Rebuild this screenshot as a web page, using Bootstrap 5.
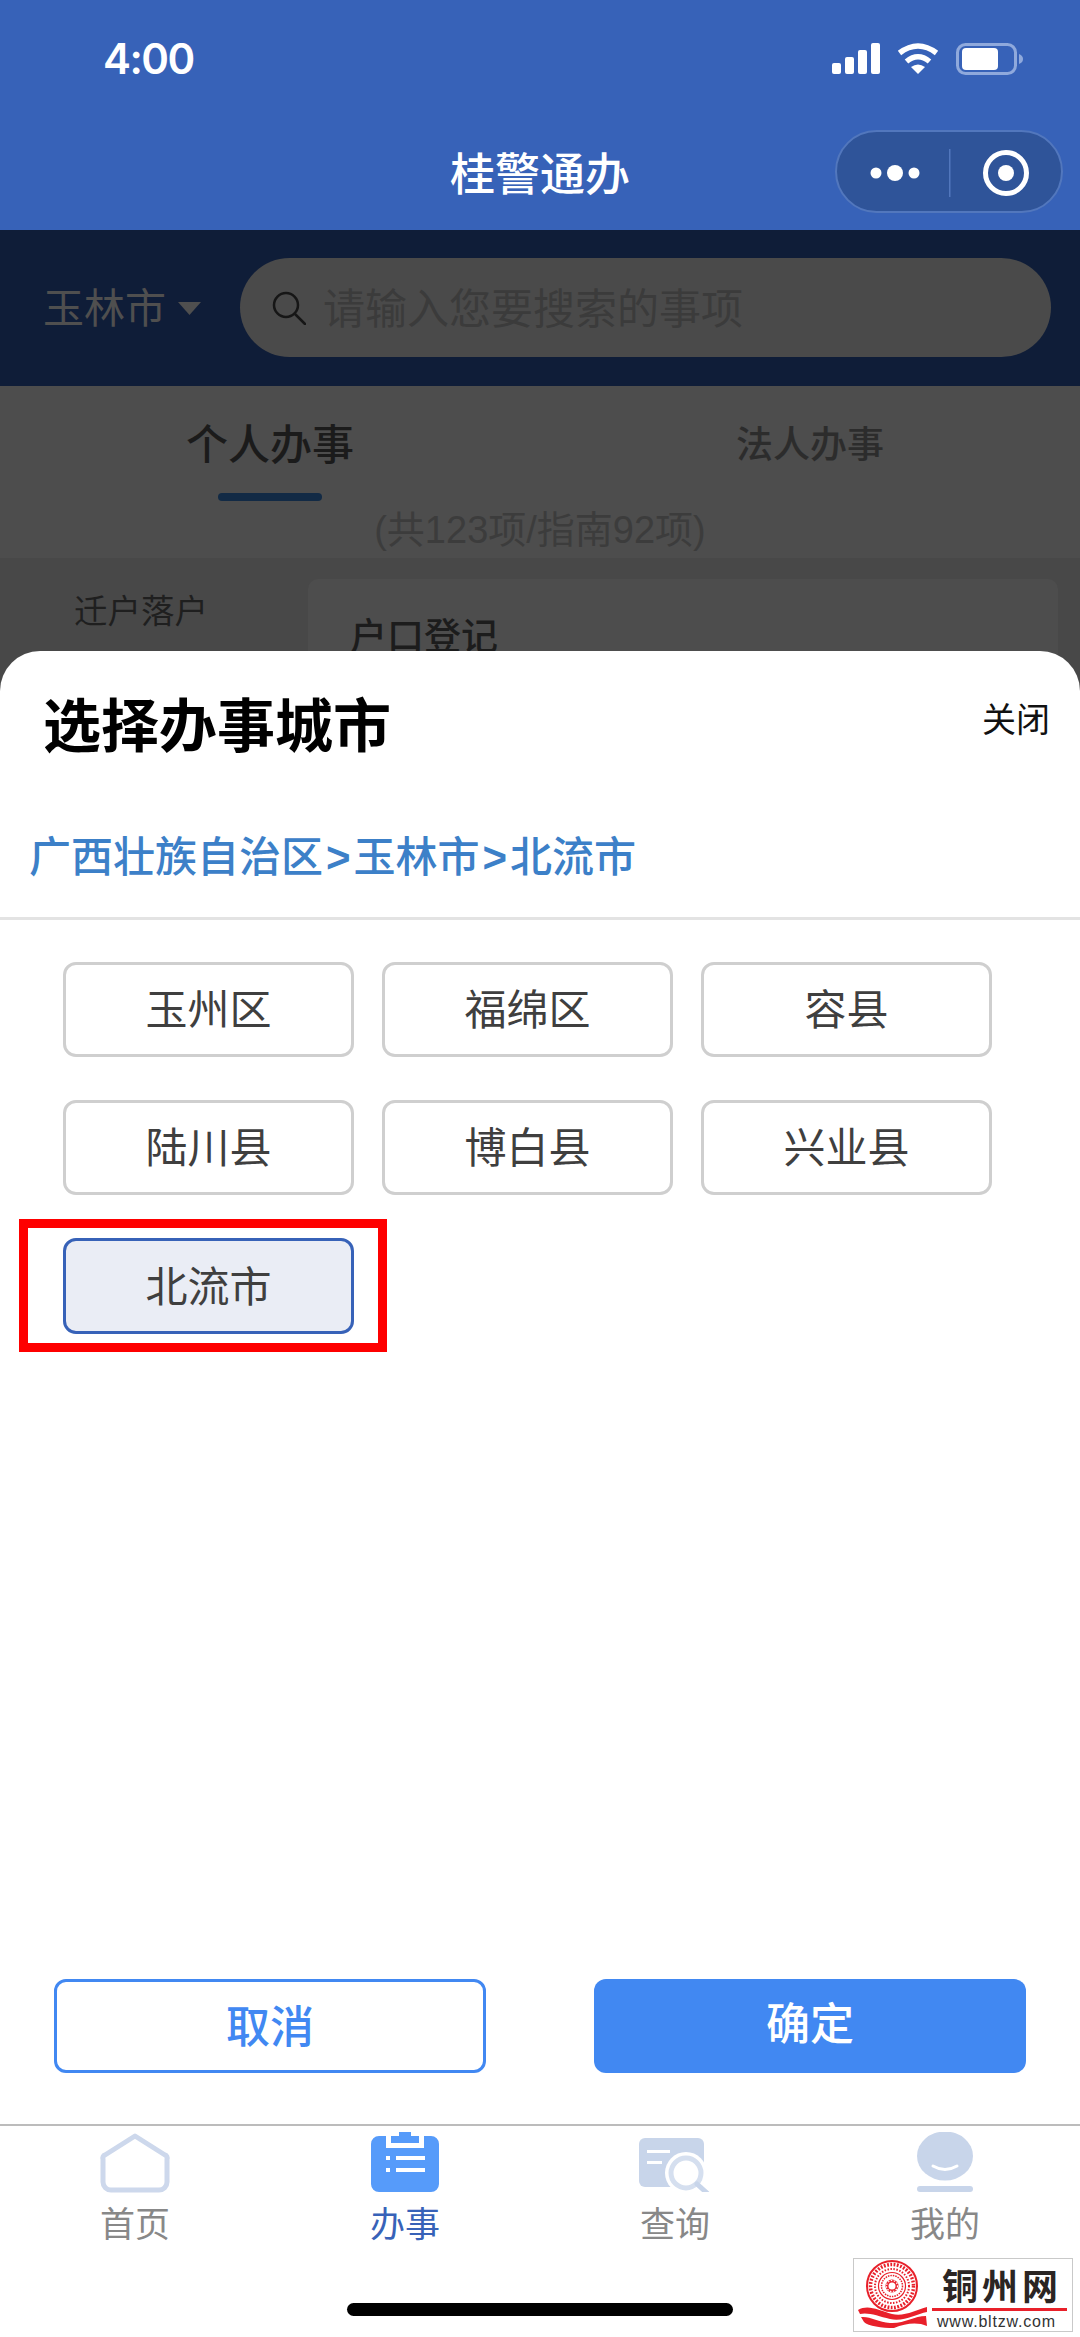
<!DOCTYPE html>
<html lang="zh-CN">
<head>
<meta charset="utf-8">
<title>桂警通办</title>
<link href="https://cdn.jsdelivr.net/npm/bootstrap@5.3.0/dist/css/bootstrap.min.css" rel="stylesheet">
<style>
html,body{margin:0;background:#fff}
body{font-family:"Liberation Sans","Noto Sans CJK SC",sans-serif}
.phone{width:1080px;height:2337px;overflow:hidden;background:#4d4d4d}
.topbar{height:230px;background:#3762b8;color:#fff}
.clock{left:103px;top:33px;font:600 42px/52px Inter,"Liberation Sans",sans-serif;letter-spacing:-1.5px}
.stat-icons{left:832px;top:43px}
.apptitle{height:90px;top:131px;left:0;right:0;font-size:45px;font-weight:500;line-height:90px}
.capsule{left:835px;top:130px;width:228px;height:83px;border-radius:42px;background:#2f5499;border:2px solid #5277bd}
.searchbar{height:156px;background:#0f1d38;padding:28px 29px 29px 43px}
.cityname{font-size:41px;color:#4f4f4f;line-height:99px;width:197px;padding-top:3px}
.tri{width:25px;height:14px;margin-left:11px;margin-top:-2px}
.searchpill{height:99px;width:811px;border-radius:50px;background:#4a4a4a;padding-left:32px}
.holder{font-size:42px;color:#3b3b3b;margin-left:17px;padding-top:3px}
.tabhead{height:172px;background:#4d4d4d}
.tabcell{width:50%;height:114px;line-height:120px;text-align:center}
.tab-on{font-size:42px;font-weight:500;color:#1b1b1b}
.tab-off{font-size:37px;font-weight:500;color:#2c2c2c}
.tabbar-mark{left:218px;top:107px;width:104px;height:8px;border-radius:4px;background:#122a45}
.tabcount{left:0;right:0;top:114px;line-height:60px;font-size:38px;color:#3c3c3c;text-align:center}
.listarea{background:#484848;height:800px;padding:21px 22px 0 0}
.leftmenu{width:308px;font-size:33.500px;color:#1f1f1f;text-align:center;padding:8px 26px 0 0}
.listcard{flex:1;height:300px;background:#4d4d4d;border-radius:10px;padding:34px 42px;font-size:37px;font-weight:500;color:#1c1c1c;line-height:50px}
.sheet{left:0;right:0;top:651px;bottom:0;background:#fff;border-radius:40px 40px 0 0}
.sheethead{height:132px;padding:0 30px 0 43px}
.sheettitle{font-size:58px;font-weight:700;color:#000;line-height:72px;padding-top:40px}
.closer{font-size:34px;color:#111;line-height:44px;padding-top:47px}
.crumb{height:137px;padding:45px 0 0 29px;font-size:42px;font-weight:500;color:#3c80c8;line-height:60px;border-bottom:3px solid #e3e3e3}
.crumb b{margin:0 3px}
.cityrow{display:grid;grid-template-columns:repeat(3,291px);column-gap:28px;row-gap:43px;padding:42px 0 0 63px}
.citybtn{height:95px;border:3px solid #cfcfcf;border-radius:13px;background:#fff;font-size:42px;color:#3f3f3f;padding:3px 0 0;line-height:1}
.citybtn.chosen{position:relative;background:#eaedf5;border-color:#3762b8;height:96px}
.redbox{position:absolute;left:-47px;right:-36px;top:-22px;bottom:-21px;border:9px solid #fe0000;pointer-events:none}
.actions{position:absolute;left:54px;right:54px;top:1328px;gap:108px}
.act{width:432px;height:94px;border-radius:12px;font-size:44px;font-weight:500;padding:4px 0 0;line-height:1}
.act-line{background:#fff;border:3px solid #4188f2;color:#4188f2}
.act-fill{background:#4188f2;border:0;color:#fff;padding:0 0 2px}
.bottomnav{position:absolute;left:0;right:0;top:1473px;height:213px;border-top:2px solid #bcbcbc}
.navitem{width:270px;padding-top:6px;font-size:35px;color:#888;line-height:42px}
.navitem.on{color:#3762b8}
.navicon{height:60px;margin-bottom:12px}
.homebar{position:absolute;left:347px;top:1652px;width:386px;height:13px;border-radius:7px;background:#000}
.stamp{position:absolute;left:853px;top:1607px;width:220px;height:74px;background:#fff;border:1px solid #c9c9c9}
.stamp-logo{left:2px;top:1px}
.stamp-name{left:88px;top:1px;font-size:36px;font-weight:700;color:#2b2523;line-height:48px;letter-spacing:4px;font-family:"Noto Sans CJK SC",sans-serif;white-space:nowrap}
.stamp-rule{left:78px;top:49px;width:135px;height:3px;background:#e8202a}
.stamp-url{left:83px;top:53px;font-size:16px;line-height:19px;letter-spacing:.8px;color:#333;white-space:nowrap}
</style>
</head>
<body>
<div class="phone position-relative">
  <header class="topbar position-relative">
    <div class="clock position-absolute">4:00</div>
    <svg class="stat-icons position-absolute" width="192" height="32" viewBox="0 0 192 32" fill="#fff">
      <rect x="0" y="20" width="9" height="11" rx="2"/><rect x="13" y="14" width="9" height="17" rx="2"/><rect x="26" y="7" width="9" height="24" rx="2"/><rect x="39" y="0" width="9" height="31" rx="2"/>
      <path d="M67.500 10Q86-4 104.500 10M74.500 18.500Q86 9 97.500 18.500" fill="none" stroke="#fff" stroke-width="5.500"/>
      <path d="M86 31L79 24Q86 19 93 24z"/>
      <rect x="125.500" y="1.500" width="58" height="29" rx="8" fill="none" stroke="#8fa9dc" stroke-width="3"/>
      <rect x="130" y="5" width="36" height="22" rx="4"/>
      <path d="M187 11c3 1 4 3 4 5s-1 4-4 5z" fill="#8fa9dc"/>
    </svg>
    <div class="apptitle position-absolute text-center">桂警通办</div>
    <div class="capsule position-absolute">
      <svg width="224" height="79" viewBox="0 0 224 79" class="d-block">
        <g fill="#fff"><circle cx="39" cy="41" r="5.500"/><circle cx="58" cy="41" r="8"/><circle cx="77" cy="41" r="5.500"/><circle cx="169" cy="41" r="8"/></g>
        <circle cx="169" cy="41" r="20.500" fill="none" stroke="#fff" stroke-width="5"/>
        <rect x="112" y="17" width="1.500" height="48" fill="#5277bd"/>
      </svg>
    </div>
  </header>
  <section class="searchbar d-flex">
    <div class="cityname d-flex align-items-center">玉林市<svg class="tri" viewBox="0 0 25 14"><path d="M1 1h23L12.500 14z" fill="#4f4f4f"/></svg></div>
    <div class="searchpill d-flex align-items-center">
      <svg width="34" height="34" viewBox="0 0 34 34" fill="none" stroke="#161616" stroke-width="2.500" stroke-linecap="round"><circle cx="14" cy="14" r="12"/><path d="M23 23l10 10"/></svg>
      <span class="holder">请输入您要搜索的事项</span>
    </div>
  </section>
  <section class="tabhead position-relative">
    <div class="d-flex">
      <div class="tabcell tab-on">个人办事</div>
      <div class="tabcell tab-off">法人办事</div>
    </div>
    <div class="tabbar-mark position-absolute"></div>
    <div class="tabcount position-absolute">(共123项/指南92项)</div>
  </section>
  <section class="listarea d-flex">
    <div class="leftmenu">迁户落户</div>
    <div class="listcard">户口登记</div>
  </section>

  <div class="sheet position-absolute">
    <div class="sheethead d-flex justify-content-between">
      <div class="sheettitle">选择办事城市</div>
      <div class="closer">关闭</div>
    </div>
    <div class="crumb">广西壮族自治区<b>&gt;</b>玉林市<b>&gt;</b>北流市</div>
    <div class="cityrow">
      <button class="citybtn" type="button">玉州区</button>
      <button class="citybtn" type="button">福绵区</button>
      <button class="citybtn" type="button">容县</button>
      <button class="citybtn" type="button">陆川县</button>
      <button class="citybtn" type="button">博白县</button>
      <button class="citybtn" type="button">兴业县</button>
      <button class="citybtn chosen" type="button">北流市<span class="redbox"></span></button>
    </div>
    <div class="actions d-flex">
      <button class="act act-line" type="button">取消</button>
      <button class="act act-fill" type="button">确定</button>
    </div>
    <nav class="bottomnav d-flex">
      <div class="navitem text-center">
        <div class="navicon"><svg width="72" height="62" viewBox="0 0 72 62" fill="none"><path d="M36 4L66 23a3 3 0 0 1 2 4V50a8 8 0 0 1-8 8H12a8 8 0 0 1-8-8V27a3 3 0 0 1 2-4z" stroke="#cdd8ec" stroke-width="5" stroke-linejoin="round"/></svg></div>
        首页
      </div>
      <div class="navitem on text-center">
        <div class="navicon"><svg width="68" height="60" viewBox="0 0 68 60"><path d="M8 4h7v12h38V4h7a8 8 0 0 1 8 8v40a8 8 0 0 1-8 8H8a8 8 0 0 1-8-8V12a8 8 0 0 1 8-8z" fill="#569bfa"/><path d="M20 4h8V0h12v4h8v7H20z" fill="#569bfa"/><g fill="#fff"><rect x="15" y="24" width="4" height="4"/><rect x="25" y="24" width="29" height="4"/><rect x="15" y="36" width="4" height="4"/><rect x="25" y="36" width="29" height="4"/></g></svg></div>
        办事
      </div>
      <div class="navitem text-center">
        <div class="navicon"><svg width="72" height="60" viewBox="0 0 72 60"><rect x="0" y="6" width="65" height="49" rx="6" fill="#c8d5ea"/><g fill="#fff"><rect x="8" y="18" width="23" height="3"/><rect x="8" y="29" width="15" height="3"/><circle cx="47" cy="41" r="21"/></g><circle cx="47" cy="41" r="15" fill="#fff" stroke="#d5dfef" stroke-width="5"/><path d="M58 52l10 9" stroke="#c8d5ea" stroke-width="5" stroke-linecap="round"/></svg></div>
        查询
      </div>
      <div class="navitem text-center">
        <div class="navicon"><svg width="58" height="60" viewBox="0 0 58 60"><ellipse cx="29" cy="24" rx="28" ry="24.500" fill="#c8d5ea"/><path d="M17 34q12 7 24 0" stroke="#fff" stroke-width="3" fill="none" stroke-linecap="round"/><rect x="1" y="54" width="56" height="6" rx="3" fill="#c8d5ea"/></svg></div>
        我的
      </div>
    </nav>
    <div class="homebar"></div>
    <div class="stamp">
      <svg class="stamp-logo position-absolute" width="74" height="70" viewBox="0 0 74 70">
        <circle cx="36" cy="26" r="25" fill="#fff" stroke="#e8202a" stroke-width="2"/>
        <circle cx="36" cy="26" r="21.500" fill="none" stroke="#e8202a" stroke-width="3.500" stroke-dasharray="1.800 1.500"/>
        <circle cx="36" cy="26" r="17" fill="none" stroke="#e8202a" stroke-width="2" stroke-dasharray="1.500 1.500"/>
        <circle cx="36" cy="26" r="13.500" fill="none" stroke="#e8202a" stroke-width="1.200"/>
        <circle cx="36" cy="26" r="10.500" fill="none" stroke="#e8202a" stroke-width="1.500" stroke-dasharray="1.500 1"/>
        <circle cx="36" cy="26" r="6.500" fill="#e8202a"/>
        <circle cx="36" cy="26" r="3.500" fill="#fff"/>
        <circle cx="36" cy="26" r="5.500" fill="none" stroke="#fff" stroke-width="1.200" stroke-dasharray="1.500 1.500"/>
        <path d="M2 50C12 44 22 50 36 54C48 57 60 50 71 47L71 52C60 54 48 62 34 59C22 56 12 52 4 54z" fill="#e8202a"/>
        <path d="M5 57C14 56 22 62 34 63C48 64 58 56 70 56L71 66C62 62 50 63 38 68C26 68 12 66 8 62z" fill="#e8202a"/>
      </svg>
      <div class="stamp-name position-absolute">铜州网</div>
      <div class="stamp-rule position-absolute"></div>
      <div class="stamp-url position-absolute">www.bltzw.com</div>
    </div>
  </div>
</div>
<script src="https://cdn.jsdelivr.net/npm/bootstrap@5.3.0/dist/js/bootstrap.bundle.min.js"></script>
</body>
</html>
